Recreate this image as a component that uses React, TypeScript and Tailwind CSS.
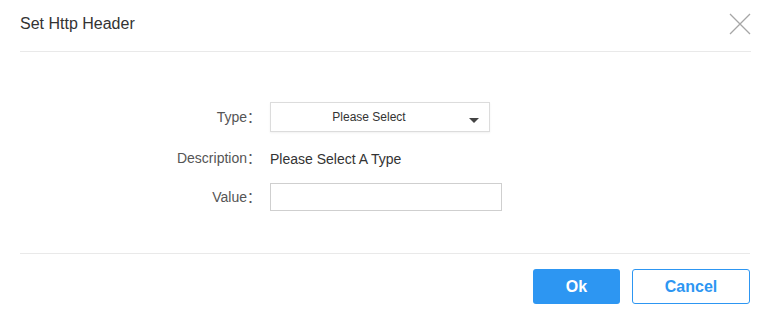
import { useState } from "react";

/** Set Http Header dialog — type select, read-only description, free value. */

const FONT = { fontFamily: '"Liberation Sans", Arial, "Noto Sans CJK SC", sans-serif' };

function Row({ label, children }: { label: string; children: React.ReactNode }) {
  return (
    <div className="flex items-center">
      <label className="w-[261px] shrink-0 text-right text-[14px] text-[#555]">{label}：</label>
      <div className="ml-[9px] flex items-center">{children}</div>
    </div>
  );
}

export default function App() {
  const [value, setValue] = useState("");

  return (
    <div style={FONT} className="flex h-[318px] w-[768px] flex-col bg-white text-[#333]">
      {/* header */}
      <div className="ml-5 mr-[17px] flex h-[52px] items-start justify-between border-b border-[#e9e9e9] pt-[14px]">
        <h1 className="text-[16px] leading-5 text-[#333]">Set Http Header</h1>
        <button type="button" aria-label="Close" className="-mt-[1px] h-[22px] w-[22px] text-[#a6a6a6]">
          <svg viewBox="0 0 22 22" className="h-[22px] w-[22px]" fill="none" stroke="currentColor" strokeWidth="1.3">
            <path d="M1 1L21 21M21 1L1 21" />
          </svg>
        </button>
      </div>

      {/* form */}
      <div className="flex flex-col pt-[50px]">
        <Row label="Type">
          <button
            type="button"
            className="relative flex h-[30px] w-[220px] items-center justify-center border border-[#dcdcdc] bg-white pr-[22px] text-[12px] text-[#333] shadow-[0_1px_2px_rgba(0,0,0,0.06)]"
          >
            Please Select
            <span className="absolute right-[10px] top-[15px] h-0 w-0 border-x-[5px] border-t-[5px] border-x-transparent border-t-[#444]" />
          </button>
        </Row>
        <div className="mt-[16px] h-5">
          <Row label="Description">
            <span className="text-[14px] leading-5 text-[#333]">Please Select A Type</span>
          </Row>
        </div>
        <div className="mt-[15px]">
          <Row label="Value">
            <input
              value={value}
              onChange={(e) => setValue(e.target.value)}
              className="h-[28px] w-[232px] border border-[#cfcfcf] px-2 text-[13px] outline-none"
            />
          </Row>
        </div>
      </div>

      {/* footer */}
      <div className="ml-5 mr-[18px] mt-[42px] flex justify-end gap-3 border-t border-[#e9e9e9] pt-[15px]">
        <button
          type="button"
          className="h-[35px] w-[87px] rounded-[3px] bg-[#2d96f2] text-[16px] font-bold text-white"
        >
          Ok
        </button>
        <button
          type="button"
          className="h-[35px] w-[118px] rounded-[3px] border border-[#2d96f2] bg-white text-[16px] font-bold text-[#2d96f2]"
        >
          Cancel
        </button>
      </div>
    </div>
  );
}
